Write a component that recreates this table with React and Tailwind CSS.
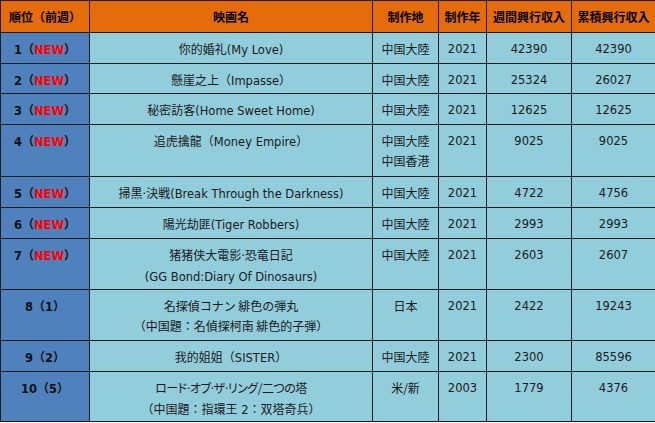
const rows = [
  { rank: "1", prev: "NEW", title: ["你的婚礼(My Love)"], place: ["中国大陸"], year: "2021", week: "42390", total: "42390", h: "h-[31px]" },
  { rank: "2", prev: "NEW", title: ["懸崖之上（Impasse）"], place: ["中国大陸"], year: "2021", week: "25324", total: "26027", h: "h-[30px]" },
  { rank: "3", prev: "NEW", title: ["秘密訪客(Home Sweet Home)"], place: ["中国大陸"], year: "2021", week: "12625", total: "12625", h: "h-[31px]" },
  { rank: "4", prev: "NEW", title: ["追虎擒龍（Money Empire）"], place: ["中国大陸", "中国香港"], year: "2021", week: "9025", total: "9025", h: "h-[52px]" },
  { rank: "5", prev: "NEW", title: ["掃黒·決戦(Break Through the Darkness)"], place: ["中国大陸"], year: "2021", week: "4722", total: "4756", h: "h-[31px]" },
  { rank: "6", prev: "NEW", title: ["陽光劫匪(Tiger Robbers)"], place: ["中国大陸"], year: "2021", week: "2993", total: "2993", h: "h-[31px]" },
  { rank: "7", prev: "NEW", title: ["猪猪侠大電影·恐竜日記", "(GG Bond:Diary Of Dinosaurs)"], place: ["中国大陸"], year: "2021", week: "2603", total: "2607", h: "h-[51px]" },
  { rank: "8", prev: "1", title: ["名探偵コナン 緋色の弾丸", "（中国題：名偵探柯南 緋色的子弾）"], place: ["日本"], year: "2021", week: "2422", total: "19243", h: "h-[51px]" },
  { rank: "9", prev: "2", title: ["我的姐姐（SISTER）"], place: ["中国大陸"], year: "2021", week: "2300", total: "85596", h: "h-[31px]" },
  { rank: "10", prev: "5", title: ["ロード·オブ·ザ·リング/二つの塔", "（中国題：指環王 2：双塔奇兵）"], place: ["米/新"], year: "2003", week: "1779", total: "4376", h: "h-[50px]", narrow: true },
];

const headers = ["順位（前週）", "映画名", "制作地", "制作年", "週間興行収入", "累積興行収入"];
const widths = ["w-[89px]", "w-[283px]", "w-[66px]", "w-[48px]", "w-[85px]", "w-[84px]"];

const cell = "border border-[#1c1c1c] text-center align-top pt-[6px] px-0 leading-[20px]";

// latin runs get a verdana-like face, CJK runs keep the CJK font
function Mixed({ text }) {
  const parts = text.match(/[A-Za-z0-9 ().:\/·-]+|[^A-Za-z0-9 ().:\/·-]+/g) || [];
  return parts.map((p, i) =>
    /[A-Za-z0-9·]/.test(p) ? (
      <span key={i} className="text-[11.5px] font-['DejaVu_Sans',sans-serif]">
        {p}
      </span>
    ) : (
      <span key={i}>{p}</span>
    )
  );
}

export default function App() {
  return (
    <div className="w-[655px] h-[423px] bg-white overflow-hidden">
      <table className="w-[655px] table-fixed border-collapse border border-[#8a8a8a] text-[12px] text-[#1a1a1a] font-['Noto_Sans_CJK_JP',sans-serif]">
        <colgroup>
          {widths.map((w, i) => (
            <col key={i} className={w} />
          ))}
        </colgroup>
        <thead>
          <tr className="h-[32px] bg-[#e46c0a]">
            {headers.map((h) => (
              <th key={h} className="border border-[#1c1c1c] text-center align-middle font-bold text-black leading-[20px] whitespace-nowrap">
                {h}
              </th>
            ))}
          </tr>
        </thead>
        <tbody>
          {rows.map((r) => (
            <tr key={r.rank} className={`${r.h} bg-[#92cddc]`}>
              <td className={`${cell} bg-[#4f81bd] font-bold text-[#111]`}>
                <span className="text-[11.5px] font-['DejaVu_Sans',sans-serif]">{r.rank}</span>（
                {r.prev === "NEW" ? (
                  <span className="text-[11.5px] text-[#ff0000] font-['DejaVu_Sans',sans-serif]">NEW</span>
                ) : (
                  <span className="text-[11.5px] font-['DejaVu_Sans',sans-serif]">{r.prev}</span>
                )}
                ）
              </td>
              <td className={`${cell} whitespace-nowrap`}>
                {r.title.map((t, i) => (
                  <div key={t} className={r.narrow && i === 0 ? "[font-feature-settings:'palt'] tracking-[-0.5px]" : ""}>
                    <Mixed text={t} />
                  </div>
                ))}
              </td>
              <td className={cell}>
                {r.place.map((p) => (
                  <div key={p}>
                    <Mixed text={p} />
                  </div>
                ))}
              </td>
              <td className={`${cell} text-[11.5px] font-['DejaVu_Sans',sans-serif]`}>{r.year}</td>
              <td className={`${cell} text-[11.5px] font-['DejaVu_Sans',sans-serif]`}>{r.week}</td>
              <td className={`${cell} text-[11.5px] font-['DejaVu_Sans',sans-serif]`}>{r.total}</td>
            </tr>
          ))}
        </tbody>
      </table>
    </div>
  );
}
